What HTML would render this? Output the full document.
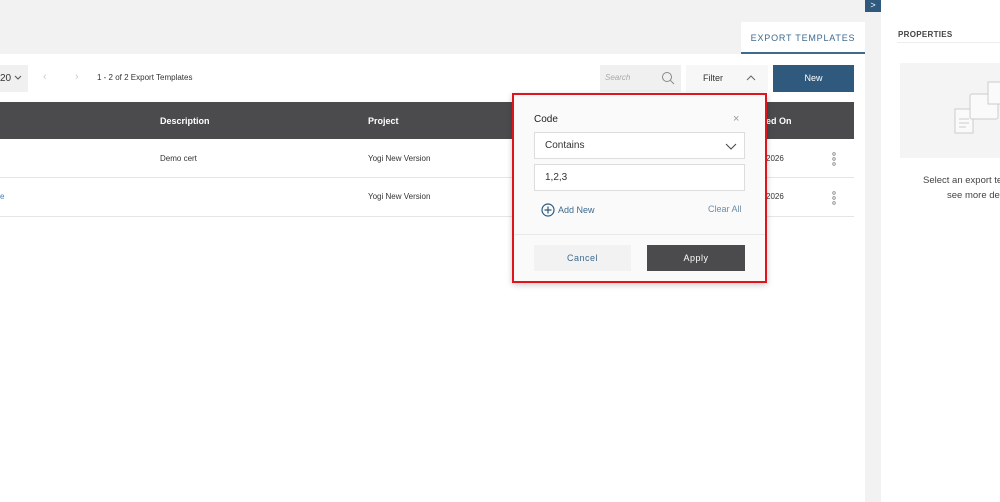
<!DOCTYPE html>
<html><head><style>
*{box-sizing:border-box;margin:0;padding:0}
body{width:1000px;height:502px;overflow:hidden;font-family:"Liberation Sans",sans-serif;background:#fff;position:relative;font-size:9px;color:#333}
.a{position:absolute}
.dots{position:absolute;width:4px;height:14px}
</style></head><body>
<div class="a" style="left:0;top:0;width:865px;height:54px;background:#f2f2f2"></div>
<div class="a" style="left:741px;top:22px;width:124px;height:32px;background:#fff;border-bottom:2px solid #3d6a8e;color:#3d6a8e;font-size:9px;letter-spacing:.8px;text-align:center;line-height:32px">EXPORT TEMPLATES</div>
<div class="a" style="left:865px;top:0;width:16px;height:502px;background:#f2f2f2"></div>
<div class="a" style="left:865px;top:0;width:16px;height:12px;background:#2f5a7e;color:#fff;font-size:9px;text-align:center;line-height:11px">&gt;</div>
<div class="a" style="left:0;top:65px;width:28px;height:27px;background:#f0f0f0;font-size:10px;line-height:27px">20 <svg width="8" height="6"><path d="M1 1L4 4L7 1" fill="none" stroke="#555"/></svg></div>
<div class="a" style="left:43px;top:71px;color:#ccc;font-size:11px">&lsaquo;</div>
<div class="a" style="left:75px;top:71px;color:#ccc;font-size:11px">&rsaquo;</div>
<div class="a" style="left:97px;top:73px;font-size:8px">1 - 2 of 2 Export Templates</div>
<div class="a" style="left:600px;top:65px;width:81px;height:27px;background:#f0f0f0"><span class="a" style="left:5px;top:8px;color:#aaa;font-style:italic;font-size:8px">Search</span>
<svg class="a" style="left:61px;top:6px" width="14" height="14" viewBox="0 0 14 14"><circle cx="6" cy="6" r="4.5" fill="none" stroke="#888" stroke-width="1"/><path d="M9.3 9.3L13 13" stroke="#888"/></svg></div>
<div class="a" style="left:686px;top:65px;width:82px;height:27px;background:#f7f7f7"><span class="a" style="left:17px;top:8px;font-size:9px">Filter</span><svg class="a" style="left:60px;top:9px" width="10" height="8"><path d="M1 6L5 2L9 6" fill="none" stroke="#666"/></svg></div>
<div class="a" style="left:773px;top:65px;width:81px;height:27px;background:#2f5a7e;color:#fff;font-size:9px;text-align:center;line-height:27px">New</div>
<div class="a" style="left:0;top:102px;width:854px;height:37px;background:#4b4b4d;color:#fff;font-weight:bold;font-size:9px">
<span class="a" style="left:160px;top:14px">Description</span><span class="a" style="left:368px;top:14px">Project</span><span class="a" style="left:766px;top:14px">ed On</span></div>
<div class="a" style="left:0;top:139px;width:854px;height:39px;border-bottom:1px solid #e5e5e5"><span class="a" style="left:160px;top:15px;font-size:8px">Demo cert</span><span class="a" style="left:368px;top:15px;font-size:8px">Yogi New Version</span><span class="a" style="left:766px;top:15px;font-size:8px">2026</span><svg class="dots" style="left:832px;top:13px" width="4" height="14"><circle cx="2" cy="2" r="1.3" fill="none" stroke="#888" stroke-width=".8"/><circle cx="2" cy="7" r="1.3" fill="none" stroke="#888" stroke-width=".8"/><circle cx="2" cy="12" r="1.3" fill="none" stroke="#888" stroke-width=".8"/></svg></div>
<div class="a" style="left:0;top:178px;width:854px;height:39px;border-bottom:1px solid #e5e5e5"><span class="a" style="left:0;top:14px;font-size:8px;color:#3b7dbf">e</span><span class="a" style="left:368px;top:14px;font-size:8px">Yogi New Version</span><span class="a" style="left:766px;top:14px;font-size:8px">2026</span><svg class="dots" style="left:832px;top:13px" width="4" height="14"><circle cx="2" cy="2" r="1.3" fill="none" stroke="#888" stroke-width=".8"/><circle cx="2" cy="7" r="1.3" fill="none" stroke="#888" stroke-width=".8"/><circle cx="2" cy="12" r="1.3" fill="none" stroke="#888" stroke-width=".8"/></svg></div>
<div class="a" style="left:512px;top:93px;width:255px;height:190px;background:#fafafa;border:2px solid #e0141c;box-shadow:0 2px 6px rgba(0,0,0,.2)">
<span class="a" style="left:20px;top:19px;font-size:10px;color:#222">Code</span>
<span class="a" style="left:219px;top:18px;font-size:11px;color:#999">×</span>
<div class="a" style="left:20px;top:37px;width:211px;height:27px;background:#fff;border:1px solid #ddd;font-size:10px;line-height:25px;padding-left:10px">Contains<svg class="a" style="left:190px;top:9px" width="12" height="8"><path d="M1 2L6 7L11 2" fill="none" stroke="#444"/></svg></div>
<div class="a" style="left:20px;top:69px;width:211px;height:27px;background:#fff;border:1px solid #ddd;font-size:10px;line-height:25px;padding-left:10px">1,2,3</div>
<svg class="a" style="left:27px;top:108px" width="14" height="14"><circle cx="7" cy="7" r="6" fill="none" stroke="#2f5a7e" stroke-width="1.2"/><path d="M7 3.5V10.5M3.5 7H10.5" stroke="#2f5a7e" stroke-width="1.2"/></svg>
<span class="a" style="left:44px;top:110px;font-size:9px;color:#3d6a8e">Add New</span>
<span class="a" style="left:194px;top:109px;font-size:9px;color:#6a8eaa">Clear All</span>
<div class="a" style="left:0;top:139px;width:251px;height:1px;background:#e8e8e8"></div>
<div class="a" style="left:20px;top:150px;width:97px;height:26px;background:#f2f2f2;color:#3d6a8e;font-size:9px;text-align:center;line-height:26px;letter-spacing:.5px">Cancel</div>
<div class="a" style="left:133px;top:150px;width:98px;height:26px;background:#4b4b4d;color:#fff;font-size:9px;text-align:center;line-height:26px;letter-spacing:.5px">Apply</div>
</div>
<div class="a" style="left:898px;top:30px;font-size:8px;font-weight:bold;color:#444;letter-spacing:.3px">PROPERTIES</div>
<div class="a" style="left:897px;top:42px;width:103px;height:1px;background:#eee"></div>
<div class="a" style="left:900px;top:63px;width:100px;height:95px;background:#f4f4f4">
<svg class="a" style="left:50px;top:16px" width="50" height="60"><rect x="5" y="30" width="18" height="24" fill="#fafafa" stroke="#ccc"/><path d="M9 40h10M9 44h10M9 48h7" stroke="#ccc"/><rect x="20" y="15" width="28" height="25" rx="2" fill="#fafafa" stroke="#ccc"/><rect x="38" y="3" width="14" height="22" fill="#fafafa" stroke="#ccc"/></svg></div>
<div class="a" style="left:923px;top:175px;font-size:9.5px;color:#444;white-space:nowrap">Select an export te</div>
<div class="a" style="left:947px;top:190px;font-size:9.5px;color:#444;white-space:nowrap">see more det</div>
</body></html>
